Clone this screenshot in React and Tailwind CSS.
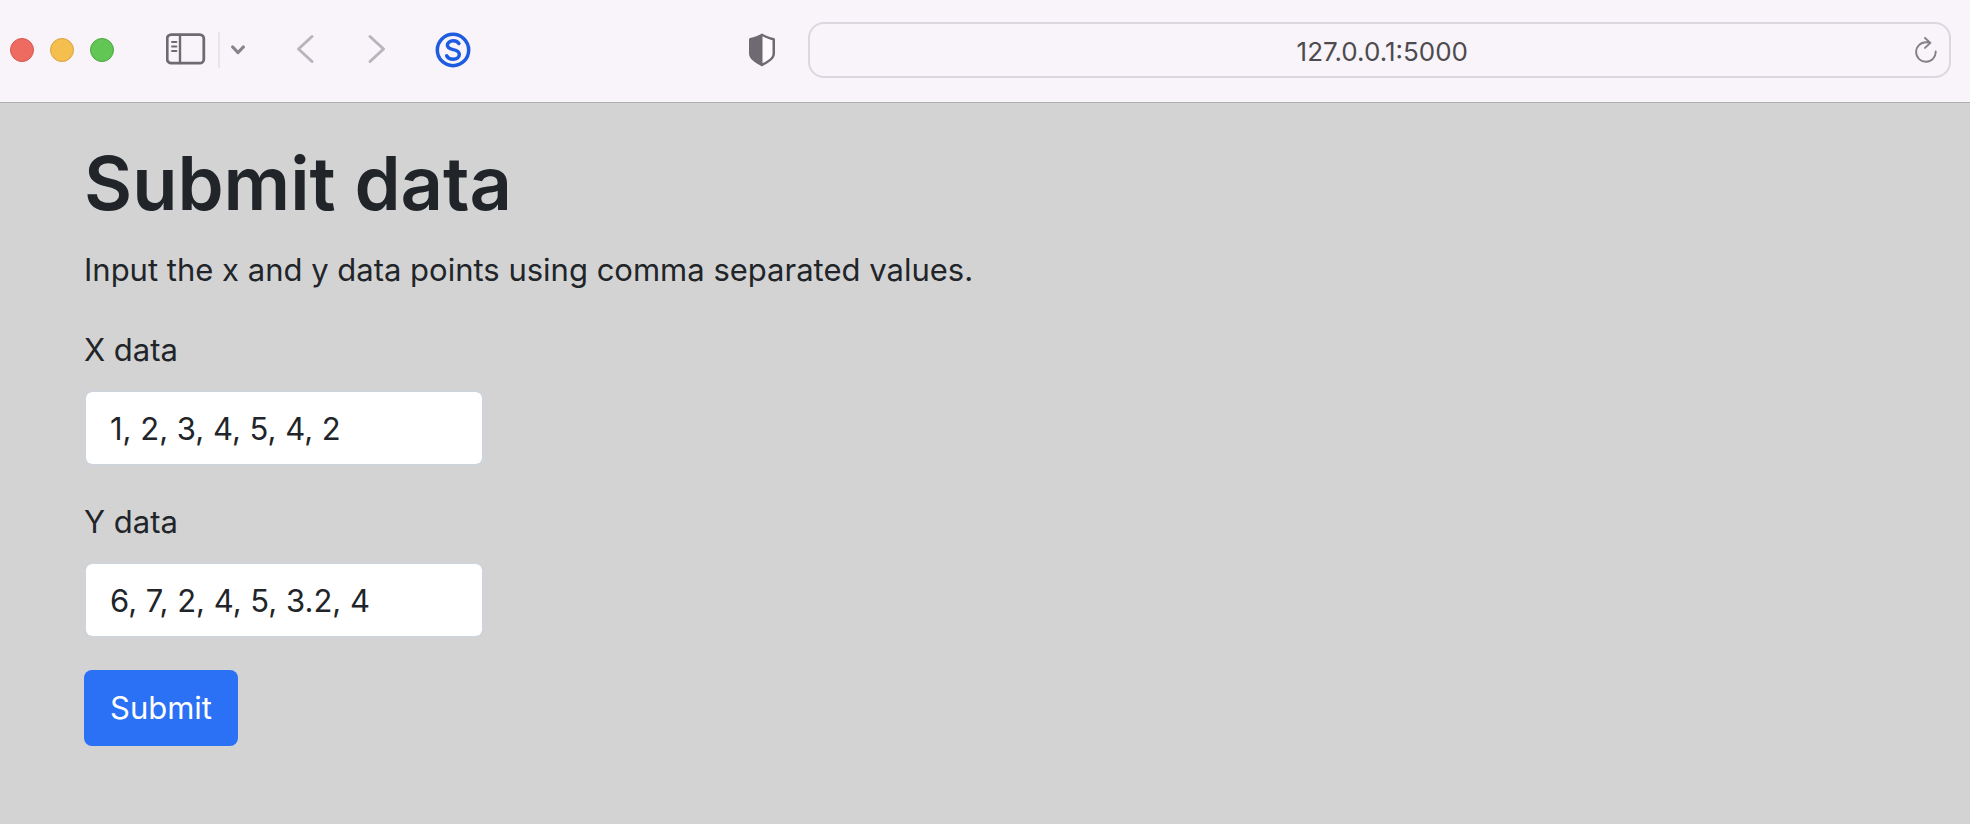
import { useState } from "react";

function SidebarIcon() {
  return (
    <svg width="40" height="32" viewBox="0 0 40 32" fill="none" stroke="#6f6a71" strokeLinecap="round" aria-hidden="true">
      <rect x="1.2" y="1.6" width="36.6" height="28.6" rx="4" strokeWidth="2.8" />
      <path d="M14 2v28" strokeWidth="2.4" />
      <path d="M6 9h4.400M6 13.500h4.400M6 18h4.400" strokeWidth="1.900" />
    </svg>
  );
}

function ChevronDownIcon() {
  return (
    <svg width="14" height="10" viewBox="0 0 14 10" fill="none" stroke="#89848b" strokeWidth="3" strokeLinecap="round" strokeLinejoin="round" aria-hidden="true">
      <path d="M1.600 1.900 7 7.600l5.400-5.700" />
    </svg>
  );
}

function BackIcon() {
  return (
    <svg width="17" height="30" viewBox="0 0 17 30" fill="none" stroke="#b9b4bb" strokeWidth="2.900" strokeLinecap="round" strokeLinejoin="round" aria-hidden="true">
      <path d="M15 2.500 1.500 15 15 27.500" />
    </svg>
  );
}

function ForwardIcon() {
  return (
    <svg width="17" height="30" viewBox="0 0 17 30" fill="none" stroke="#b9b4bb" strokeWidth="2.900" strokeLinecap="round" strokeLinejoin="round" aria-hidden="true">
      <path d="M2 2.500 15.500 15 2 27.500" />
    </svg>
  );
}

function ExtensionIcon() {
  return (
    <svg width="36" height="36" viewBox="0 0 36 36" fill="none" stroke="#1d5be0" strokeLinecap="round" aria-hidden="true">
      <circle cx="18" cy="18" r="15.700" strokeWidth="3.500" />
      <path d="M23.900 11.500C22.500 9.500 20.400 8.800 18.200 8.800c-3.400 0-5.800 1.800-5.800 4.400 0 2.800 2.500 3.600 5.900 4.400 3.800.8 6 1.900 6 4.800 0 2.900-2.500 4.800-6.100 4.800-2.900 0-5.200-1.100-6.500-3.400" strokeWidth="3.500" />
    </svg>
  );
}

function ShieldIcon() {
  return (
    <svg width="28" height="34" viewBox="0 0 28 34" aria-hidden="true">
      <path d="M14 .6c3.700 2.200 7.600 3.500 11.900 4.500.7.200 1.100.7 1.100 1.400v14c0 5.800-6.600 9.400-13 12.900C7.600 29.900 1 26.300 1 20.500v-14c0-.7.400-1.200 1.100-1.400C6.400 4.100 10.300 2.800 14 .6z" fill="#6f6a71" />
      <path d="M14.500 3.300c3.100 1.800 6.500 3 10 3.900v13.200c0 4.200-4.600 7-10 9.800z" fill="#fcfafd" />
    </svg>
  );
}

function ReloadIcon() {
  return (
    <svg width="22" height="26" viewBox="0 0 22 26" fill="none" stroke="#858087" strokeWidth="1.900" strokeLinecap="round" strokeLinejoin="round" aria-hidden="true">
      <path d="M20.700 14.500A9.800 9.800 0 1 1 11 5.200c1.300 0 2.600.1 4 .7M10 1l5.400 4.900L10 10.900" />
    </svg>
  );
}

function BrowserBar() {
  return (
    <header className="flex h-[103px] items-center border-b border-[#b0aeb1] bg-[#f8f4fa] pb-0.5 pl-2.5 pr-[19px]">
      <div className="flex shrink-0 gap-4">
        <button type="button" aria-label="Close" className="size-6 rounded-full border border-[#d9564c] bg-[#ed6b60]" />
        <button type="button" aria-label="Minimize" className="size-6 rounded-full border border-[#d9a23f] bg-[#f5bf50]" />
        <button type="button" aria-label="Zoom" className="size-6 rounded-full border border-[#4ba73f] bg-[#62c655]" />
      </div>
      <div className="ml-[52px] flex shrink-0 items-center">
        <button type="button" aria-label="Sidebar" className="pb-0.5"><SidebarIcon /></button>
        <span className="ml-3 h-9 w-0.5 bg-[#e8e4ea]" />
        <button type="button" aria-label="Tab groups" className="ml-[11px]"><ChevronDownIcon /></button>
      </div>
      <nav aria-label="History" className="ml-[52px] flex shrink-0 gap-[54px] pb-0.5">
        <button type="button" aria-label="Back"><BackIcon /></button>
        <button type="button" aria-label="Forward"><ForwardIcon /></button>
      </nav>
      <button type="button" aria-label="Extension" className="ml-[50px] shrink-0"><ExtensionIcon /></button>
      <div className="ml-auto flex w-[62%] shrink-0 items-center gap-8">
        <button type="button" aria-label="Privacy report" className="shrink-0"><ShieldIcon /></button>
        <div className="flex h-14 flex-1 items-center rounded-2xl border-2 border-[#dcd7de] pr-3">
          <input
            aria-label="Address"
            defaultValue="127.0.0.1:5000"
            className="min-w-0 flex-1 bg-transparent pl-10 pt-0.5 text-center text-[26px] text-[#4d4b4e] outline-none"
          />
          <button type="button" aria-label="Reload" className="shrink-0"><ReloadIcon /></button>
        </div>
      </div>
    </header>
  );
}

function Field({ id, label, value, onChange }) {
  return (
    <div className="flex flex-col items-start gap-4">
      <label htmlFor={id}>{label}</label>
      <input
        id={id}
        type="text"
        value={value}
        onChange={(event) => onChange(event.target.value)}
        className="h-[76px] w-[400px] max-w-full rounded-lg border-2 border-[#ced4da] bg-white bg-clip-padding px-6 outline-none"
      />
    </div>
  );
}

export default function App() {
  const [xData, setXData] = useState("1, 2, 3, 4, 5, 4, 2");
  const [yData, setYData] = useState("6, 7, 2, 4, 5, 3.2, 4");

  return (
    <div className="flex min-h-screen flex-col bg-[#d3d3d3] font-['Inter',sans-serif]">
      <BrowserBar />
      <main className="px-[84px] pb-16 pt-8 text-[31px] leading-[48px] text-[#212529]">
        <h1 className="text-[74px] font-semibold leading-[96px]">Submit data</h1>
        <p className="mt-[15px]">Input the x and y data points using comma separated values.</p>
        <form className="mt-8 flex flex-col items-start gap-8" onSubmit={(event) => event.preventDefault()}>
          <Field id="x-data" label="X data" value={xData} onChange={setXData} />
          <Field id="y-data" label="Y data" value={yData} onChange={setYData} />
          <button type="submit" className="h-[76px] rounded-lg bg-[#2b71f5] px-[26px] text-white">Submit</button>
        </form>
      </main>
    </div>
  );
}
